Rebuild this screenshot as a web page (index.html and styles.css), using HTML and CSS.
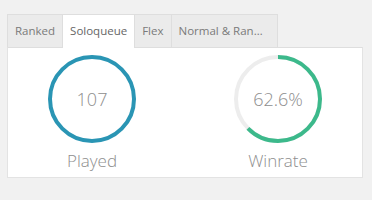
FILE: index.html
```html
<!DOCTYPE html>
<html lang="en">
<head>
    <meta charset="UTF-8">
    <meta name="viewport" content="width=device-width, initial-scale=1.0">
    <title>Queue Stats</title>
    <link rel="stylesheet" href="styles.css">
</head>
<body>
    <div class="stats">
        <ul class="tabs">
            <li class="tab">Ranked</li>
            <li class="tab active">Soloqueue</li>
            <li class="tab">Flex</li>
            <li class="tab long">Normal &amp; Ranked</li>
        </ul>
        <div class="panel">
            <div class="stat">
                <div class="ring">
                    <svg width="88" height="88" viewBox="0 0 88 88">
                        <circle cx="44" cy="44" r="42" fill="none" stroke="#2a95b4" stroke-width="4"/>
                    </svg>
                    <span class="value">107</span>
                </div>
                <div class="label">Played</div>
            </div>
            <div class="stat">
                <div class="ring">
                    <svg width="88" height="88" viewBox="0 0 88 88">
                        <circle cx="44" cy="44" r="42" fill="none" stroke="#ededed" stroke-width="4"/>
                        <circle cx="44" cy="44" r="42" fill="none" stroke="#3cb98b" stroke-width="4"
                            stroke-dasharray="165.2 263.9" transform="rotate(-90 44 44)"/>
                    </svg>
                    <span class="value">62.6%</span>
                </div>
                <div class="label">Winrate</div>
            </div>
        </div>
    </div>
</body>
</html>
```

FILE: styles.css
```css
body {
    margin: 0;
    padding: 14px 9px 0 7px;
    background-color: #f1f1f1;
    font-family: "Open Sans", sans-serif;
    color: #8a8a8a;
}

.tabs {
    display: flex;
    list-style: none;
    margin: 0;
    padding: 0;
}

.tab {
    height: 32px;
    line-height: 32px;
    padding: 0 7px;
    font-size: 11.5px;
    color: #7a7a7a;
    background-color: #ebebeb;
    border: 1px solid #dedede;
    border-bottom: none;
    border-right: none;
    white-space: nowrap;
}

.tab:last-child {
    border-right: 1px solid #dedede;
}

.tab.active {
    background-color: white;
    color: #666;
    height: 33px;
    margin-bottom: -1px;
    position: relative;
}

.tab.long {
    width: 86px;
    padding-right: 12px;
    overflow: hidden;
    text-overflow: ellipsis;
}

.panel {
    display: flex;
    justify-content: center;
    gap: 98px;
    height: 131px;
    padding-top: 7px;
    box-sizing: border-box;
    background-color: white;
    border: 1px solid #e3e3e3;
    border-top-color: #dedede;
}

.stat {
    display: flex;
    flex-direction: column;
    align-items: center;
}

.ring {
    display: grid;
    place-items: center;
    width: 88px;
    height: 88px;
}

.ring svg,
.ring .value {
    grid-area: 1 / 1;
}

.value {
    font-size: 18px;
    font-weight: 300;
    color: #8e8e8e;
}

.label {
    margin-top: 6px;
    font-size: 17px;
    font-weight: 300;
    color: #8e8e8e;
}
```
